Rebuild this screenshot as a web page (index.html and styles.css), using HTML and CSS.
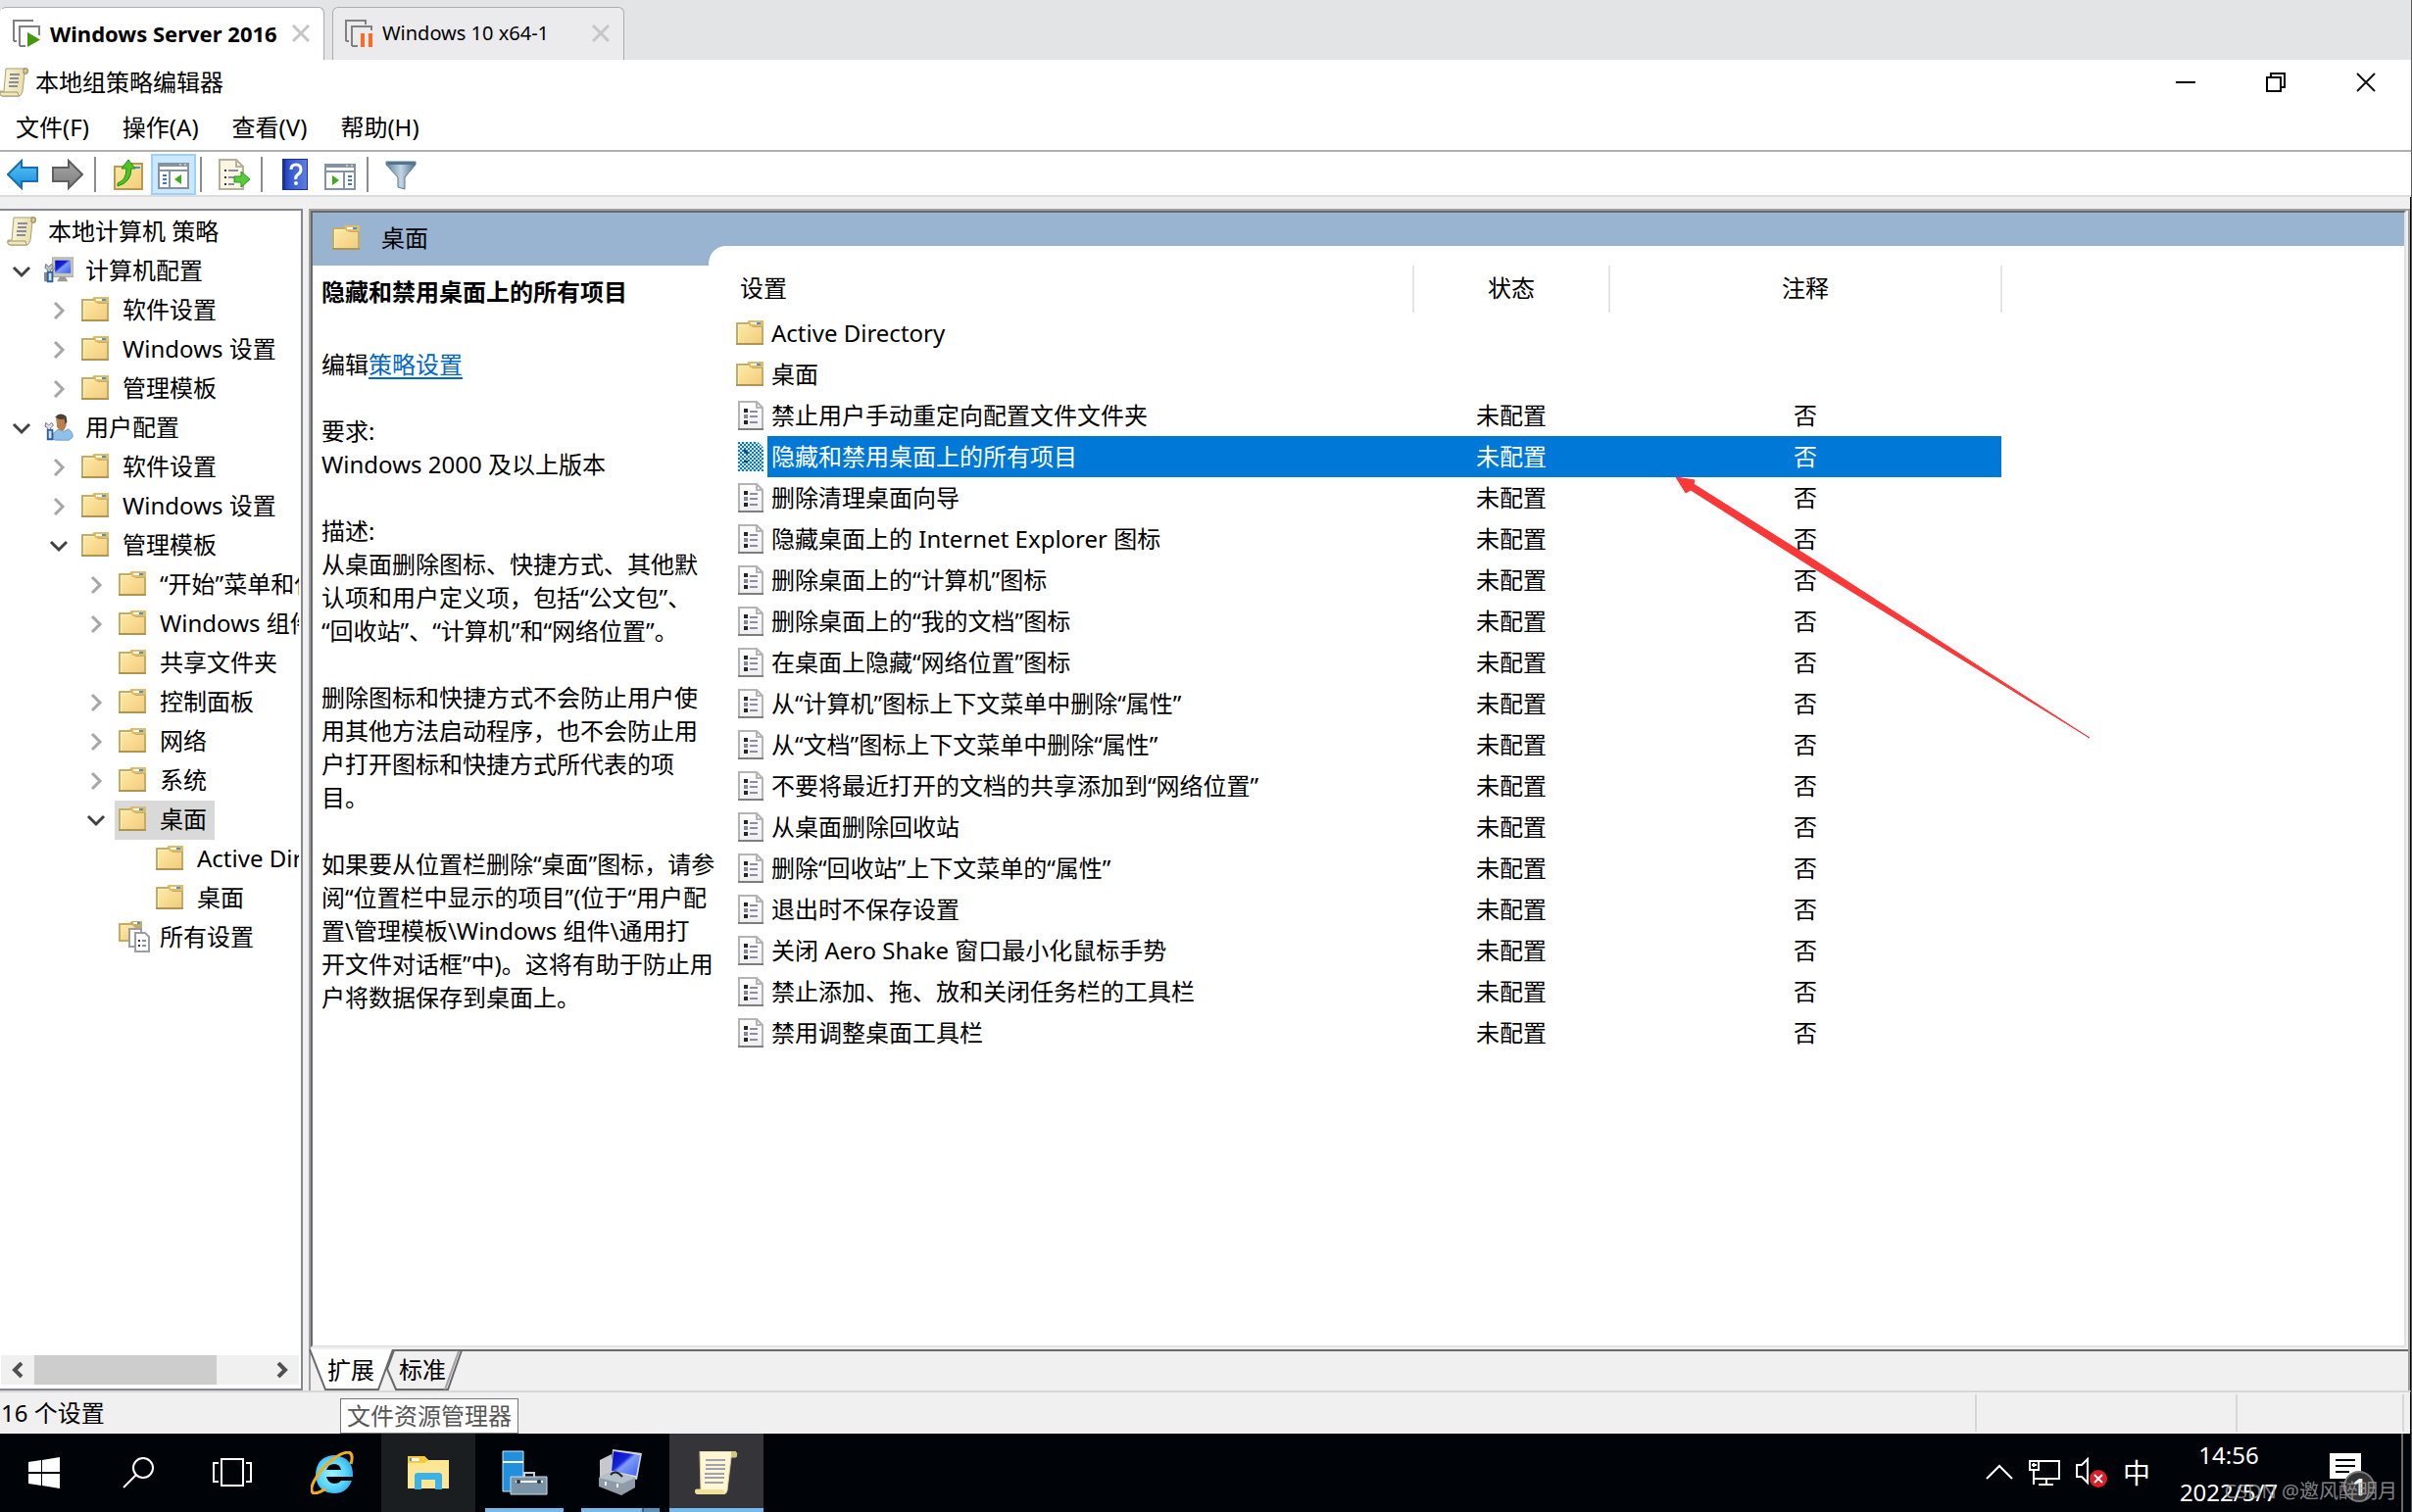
FILE: index.html
```html
<!DOCTYPE html>
<html lang="zh-CN">
<head>
<meta charset="utf-8">
<title>本地组策略编辑器</title>
<link rel="stylesheet" href="styles.css">
</head>
<body>
<svg class="defs" aria-hidden="true">
  <defs>
    <linearGradient id="gFolder" x1="0" y1="0" x2="1" y2="1"><stop offset="0" stop-color="#ffeaa6"/><stop offset="1" stop-color="#f1cd7c"/></linearGradient>
    <linearGradient id="gPaper" x1="0" y1="0" x2="1" y2="0"><stop offset="0" stop-color="#fbf7dc"/><stop offset="1" stop-color="#e6dba2"/></linearGradient>
    <linearGradient id="gScreen" x1="0" y1="0" x2="1" y2="1"><stop offset="0" stop-color="#0208b8"/><stop offset=".4" stop-color="#1626dc"/><stop offset=".5" stop-color="#7f9cf6"/><stop offset="1" stop-color="#3a5cf0"/></linearGradient>
    <linearGradient id="gBlue" x1="0" y1="0" x2="0" y2="1"><stop offset="0" stop-color="#5cc4f7"/><stop offset="1" stop-color="#1490e0"/></linearGradient>
    <linearGradient id="gGray" x1="0" y1="0" x2="0" y2="1"><stop offset="0" stop-color="#a8a8a8"/><stop offset="1" stop-color="#7c7c7c"/></linearGradient>
    <linearGradient id="gHelp" x1="0" y1="0" x2="1" y2="0"><stop offset="0" stop-color="#2440b8"/><stop offset=".2" stop-color="#3557cf"/><stop offset="1" stop-color="#5a7ee0"/></linearGradient>
    <linearGradient id="gFunnel" x1="0" y1="0" x2="1" y2="0"><stop offset="0" stop-color="#5f7f99"/><stop offset=".5" stop-color="#c3d6e4"/><stop offset="1" stop-color="#4d6f8b"/></linearGradient>
    <radialGradient id="gIe" cx=".45" cy=".5" r=".6"><stop offset="0" stop-color="#9df4ff"/><stop offset=".6" stop-color="#5ad6fb"/><stop offset="1" stop-color="#2aa4ea"/></radialGradient>
    <linearGradient id="gDoc" x1="0" y1="0" x2="0" y2="1"><stop offset="0" stop-color="#ffffff"/><stop offset="1" stop-color="#eeeeee"/></linearGradient>
    <pattern id="pDither" width="4" height="4" patternUnits="userSpaceOnUse"><path d="M0 0h2v2H0zM2 2h2v2H2z" fill="#0078d7"/></pattern>
  </defs>
  <symbol id="folder" viewBox="0 0 28 28">
    <path d="M0 3h11l3-2h14v25H0z" fill="#c8ab62"/>
    <path d="M2 5h12l3 3h9v16H2z" fill="url(#gFolder)"/>
    <path d="M2 5h11v1H3v18H2z" fill="#fff4c8"/>
    <path d="M12 1h16v6H14z" fill="#e2bb62"/><path d="M15 3h9v2h-9z" fill="#fff"/><path d="M21 3h4v2h-4z" fill="#3c96e0"/>
    <path d="M0 24h28v2H0z" fill="#b09453"/>
  </symbol>
  <symbol id="doc" viewBox="0 0 26 30">
    <path d="M1 1h18l6 6v22H1z" fill="url(#gDoc)" stroke="#b4b4b4" stroke-width="2"/>
    <path d="M19 1v6h6" fill="none" stroke="#b4b4b4" stroke-width="2"/>
    <path d="M0 28h26v2H0z" fill="#7e7e7e"/>
    <path d="M6 8h4v4H6zM6 20h4v4H6z" fill="#24242c"/><path d="M6 14h4v4H6z" fill="#85859c"/>
    <path d="M12 10h8v2h-8zM12 15h8v2h-8zM12 21h8v2h-8z" fill="#8c8ca8"/>
  </symbol>
  <symbol id="docsel" viewBox="0 0 26 30">
    <path d="M0 0h20l6 6v24H0z" fill="#dfeaf5"/><path d="M0 0h20l6 6v24H0z" fill="url(#pDither)"/>
    <path d="M6 8l4 4M6 20h4" stroke="#123c78" stroke-width="2"/>
  </symbol>
  <symbol id="scroll" viewBox="0 0 30 30">
    <path d="M7 1h21q2 1 1 5h-3l-2 18q-1 5-4 5H3q-3-1-2-5h4z" fill="url(#gPaper)" stroke="#aaa07a" stroke-width="1"/>
    <path d="M25 1h4q1 3-1 5h-3z" fill="#d9cd8f" stroke="#8d8460" stroke-width="1"/>
    <path d="M1 25h18q0 3 2 4H3q-3-1-2-4z" fill="#f1e9b7" stroke="#9c9370" stroke-width="1"/>
    <path d="M11 7h10M11 11h9M10 15h10M10 19h9" stroke="#8b8ba0" stroke-width="2"/>
  </symbol>
  <symbol id="pcconf" viewBox="0 0 32 30">
    <path d="M9 1h23v21H9z" fill="#c6c6ba" stroke="#a4a49c"/><path d="M12 4h17v14H12z" fill="url(#gScreen)"/>
    <path d="M17 22h6l3 5H14z" fill="#9a9a92"/>
    <path d="M2 8l3 3 3-3 2 3-3 4v2H4v-2l-3-3zM12 12l-3 4" fill="#b8c4bc" stroke="#667"/><path d="M0 17h4v10H0z" fill="#8b8b86"/><path d="M4 17h5v10H4z" fill="#cfe2f6" stroke="#2c5ea0" stroke-width="2"/>
  </symbol>
  <symbol id="userconf" viewBox="0 0 32 30">
    <path d="M9 28q0-9 8-11l4 3 5-3q6 3 5 9l-4 3H13z" fill="#8fc0ea" stroke="#6a9ccc"/>
    <path d="M13 5q5-6 11 0v9l-3 5h-3l-4-4z" fill="#b97f4e"/><path d="M12 4q5-6 12-1l1 6-2 3-1-6q-5 1-8-1z" fill="#4a4038"/>
    <path d="M2 10l3 3 3-3 2 3-3 3v2H4v-2l-3-2z" fill="#e0e4e8" stroke="#667"/><path d="M4 18h5v10H4z" fill="#cfe2f6" stroke="#2c5ea0" stroke-width="2"/>
  </symbol>
  <symbol id="allset" viewBox="0 0 32 32">
    <path d="M0 2h11l3-2h10v21H0z" fill="#c8ab62"/><path d="M2 4h12l3 3h5v12H2z" fill="url(#gFolder)"/><path d="M15 1h6v2h-6z" fill="#fff"/><path d="M19 1h3v2h-3z" fill="#3c96e0"/>
    <path d="M11 8h12v18H11z" fill="#fff" stroke="#9c9ca4" stroke-width="2"/><path d="M17 12h10l4 4v15H17z" fill="#fff" stroke="#9c9ca4" stroke-width="2"/>
    <path d="M20 20h2M20 25h2" stroke="#333" stroke-width="2"/><path d="M24 20h4M24 25h4" stroke="#8c8ca8" stroke-width="2"/>
  </symbol>
  <symbol id="open" viewBox="0 0 20 20"><path d="M2 6l8 8 8-8" fill="none" stroke="#404040" stroke-width="3"/></symbol>
  <symbol id="shut" viewBox="0 0 20 20"><path d="M6 2l8 8-8 8" fill="none" stroke="#a6a6a6" stroke-width="3"/></symbol>
  <symbol id="cross" viewBox="0 0 18 18"><path d="M1 1l16 16M17 1L1 17" fill="none" stroke="#c6c6c6" stroke-width="3"/></symbol>
</svg>

<div class="desktop">
<nav class="vmtabs">
  <div class="vmtab vmtab-on">
    <svg class="i28" viewBox="0 0 28 28"><path d="M1 22V1h20M7 27V7h20v9M1 22h3M7 27h6" fill="none" stroke="#808080" stroke-width="2"/><path d="M15 13l13 7.500-13 7.500z" fill="#46990f"/></svg>
    <span class="vmname">Windows Server 2016</span>
    <button class="vmclose" aria-label="关闭"><svg class="i18"><use href="#cross"/></svg></button>
  </div>
  <div class="vmtab">
    <svg class="i28" viewBox="0 0 28 28"><path d="M1 22V1h20v4M7 27V7h20v4M1 22h3M7 27h6" fill="none" stroke="#808080" stroke-width="2"/><path d="M16 14h4v14h-4zM24 14h4v14h-4z" fill="#ff6a22"/></svg>
    <span class="vmname">Windows 10 x64-1</span>
    <button class="vmclose" aria-label="关闭"><svg class="i18"><use href="#cross"/></svg></button>
  </div>
</nav>

<header class="titlebar">
  <svg class="i30"><use href="#scroll"/></svg>
  <h1>本地组策略编辑器</h1>
  <div class="winbtns">
    <button aria-label="最小化"><svg class="i20" viewBox="0 0 20 20"><path d="M0 10h20" stroke="#000" stroke-width="2"/></svg></button>
    <button aria-label="还原"><svg class="i20" viewBox="0 0 20 20"><path d="M1 5h14v14H1zM5 5V1h14v14h-4" fill="none" stroke="#000" stroke-width="2"/></svg></button>
    <button aria-label="关闭窗口"><svg class="i20" viewBox="0 0 20 20"><path d="M1 1l18 18M19 1L1 19" stroke="#111" stroke-width="2"/></svg></button>
  </div>
</header>
<nav class="menubar">
  <button>文件(F)</button><button>操作(A)</button><button>查看(V)</button><button>帮助(H)</button>
</nav>
<div class="toolbar">
  <button class="tool" aria-label="后退"><svg class="i32" viewBox="0 0 32 32"><path d="M1 16L15 2v7h16v14H15v7z" fill="url(#gBlue)" stroke="#1c6cb4" stroke-width="2"/></svg></button>
  <button class="tool" aria-label="前进"><svg class="i32" viewBox="0 0 32 32"><path d="M31 16L17 2v7H1v14h16v7z" fill="url(#gGray)" stroke="#5e5e5e" stroke-width="2"/></svg></button>
  <span class="sep"></span>
  <button class="tool" aria-label="上移"><svg class="i32" viewBox="0 0 32 32"><path d="M2 8h10l3-3h15v26H2z" fill="url(#gFolder)" stroke="#b89a50" stroke-width="2"/><path d="M22 8h6v2h-6z" fill="#3c96e0"/><path d="M5 25q9-3 9-15H9l7-9 7 9h-4q0 14-14 18z" fill="#4cc424" stroke="#2b8a18" stroke-width="1"/></svg></button>
  <button class="tool tool-on" aria-label="显示控制台树"><svg class="i32" viewBox="0 0 32 32"><path d="M1 5h30v25H1z" fill="#fff" stroke="#8492a2" stroke-width="2"/><path d="M1 4h30v4H1zM1 11h30v2H1z" fill="#8492a2"/><path d="M22 6h2M27 6h2" stroke="#fff"/><path d="M12 13v17" stroke="#8492a2" stroke-width="2"/><path d="M5 17h4M5 21h4M5 25h4" stroke="#3d78c0" stroke-width="2"/><path d="M24 16v10l-7-5z" fill="#3cab1e"/></svg></button>
  <span class="sep"></span>
  <button class="tool" aria-label="导出列表"><svg class="i32" viewBox="0 0 32 32"><path d="M1 1h17l7 7v23H1z" fill="#fbf6e2" stroke="#b4b09c" stroke-width="2"/><path d="M18 1v7h7" fill="none" stroke="#b4b09c" stroke-width="2"/><path d="M6 12h2M6 19h2M6 26h2" stroke="#333" stroke-width="2"/><path d="M10 12h10M10 19h6M10 26h6" stroke="#8c8ca8" stroke-width="2"/><path d="M16 18h7v-5l9 8-9 8v-5h-7z" fill="#58cc38" stroke="#2f9420"/></svg></button>
  <span class="sep"></span>
  <button class="tool" aria-label="帮助"><svg class="i32" viewBox="0 0 32 32"><path d="M3 0h26v32H3z" fill="#1d318f"/><path d="M6 1h22v30H6z" fill="url(#gHelp)"/><path d="M12 11q0-5 5-5t5 5q0 3-3 5t-2 5" fill="none" stroke="#fff" stroke-width="3"/><circle cx="17" cy="25" r="2" fill="#fff"/></svg></button>
  <button class="tool" aria-label="显示操作窗格"><svg class="i32" viewBox="0 0 32 32"><path d="M1 6h30v25H1z" fill="#fff" stroke="#8492a2" stroke-width="2"/><path d="M1 5h30v4H1zM1 12h30v2H1z" fill="#8492a2"/><path d="M22 7h2M27 7h2" stroke="#fff"/><path d="M20 14v17" stroke="#8492a2" stroke-width="2"/><path d="M24 18h4M24 22h4M24 26h4" stroke="#3d78c0" stroke-width="2"/><path d="M8 17v10l7-5z" fill="#3cab1e"/></svg></button>
  <span class="sep"></span>
  <button class="tool" aria-label="筛选器"><svg class="i32" viewBox="0 0 32 32"><path d="M1 3h30v3L20 19v12l-7-2V19L1 6z" fill="url(#gFunnel)" stroke="#5b7a93"/><path d="M3 3h26v3H3z" fill="#54748e"/></svg></button>
</div>

<main class="panes">
  <section class="treepane">
    <ul class="tree">
      <li class="l0"><span class="node"><svg class="i30"><use href="#scroll"/></svg>本地计算机 策略</span></li>
      <li class="l1"><button class="tw" aria-label="折叠"><svg class="i20"><use href="#open"/></svg></button><span class="node"><svg class="i30"><use href="#pcconf"/></svg>计算机配置</span></li>
      <li class="l2"><button class="tw" aria-label="展开"><svg class="i20"><use href="#shut"/></svg></button><span class="node"><svg class="i28"><use href="#folder"/></svg>软件设置</span></li>
      <li class="l2"><button class="tw" aria-label="展开"><svg class="i20"><use href="#shut"/></svg></button><span class="node"><svg class="i28"><use href="#folder"/></svg>Windows 设置</span></li>
      <li class="l2"><button class="tw" aria-label="展开"><svg class="i20"><use href="#shut"/></svg></button><span class="node"><svg class="i28"><use href="#folder"/></svg>管理模板</span></li>
      <li class="l1"><button class="tw" aria-label="折叠"><svg class="i20"><use href="#open"/></svg></button><span class="node"><svg class="i30"><use href="#userconf"/></svg>用户配置</span></li>
      <li class="l2"><button class="tw" aria-label="展开"><svg class="i20"><use href="#shut"/></svg></button><span class="node"><svg class="i28"><use href="#folder"/></svg>软件设置</span></li>
      <li class="l2"><button class="tw" aria-label="展开"><svg class="i20"><use href="#shut"/></svg></button><span class="node"><svg class="i28"><use href="#folder"/></svg>Windows 设置</span></li>
      <li class="l2"><button class="tw" aria-label="折叠"><svg class="i20"><use href="#open"/></svg></button><span class="node"><svg class="i28"><use href="#folder"/></svg>管理模板</span></li>
      <li class="l3"><button class="tw" aria-label="展开"><svg class="i20"><use href="#shut"/></svg></button><span class="node"><svg class="i28"><use href="#folder"/></svg>“开始”菜单和任务栏</span></li>
      <li class="l3"><button class="tw" aria-label="展开"><svg class="i20"><use href="#shut"/></svg></button><span class="node"><svg class="i28"><use href="#folder"/></svg>Windows 组件</span></li>
      <li class="l3"><span class="tw"></span><span class="node"><svg class="i28"><use href="#folder"/></svg>共享文件夹</span></li>
      <li class="l3"><button class="tw" aria-label="展开"><svg class="i20"><use href="#shut"/></svg></button><span class="node"><svg class="i28"><use href="#folder"/></svg>控制面板</span></li>
      <li class="l3"><button class="tw" aria-label="展开"><svg class="i20"><use href="#shut"/></svg></button><span class="node"><svg class="i28"><use href="#folder"/></svg>网络</span></li>
      <li class="l3"><button class="tw" aria-label="展开"><svg class="i20"><use href="#shut"/></svg></button><span class="node"><svg class="i28"><use href="#folder"/></svg>系统</span></li>
      <li class="l3"><button class="tw" aria-label="折叠"><svg class="i20"><use href="#open"/></svg></button><span class="node node-on"><svg class="i28"><use href="#folder"/></svg>桌面</span></li>
      <li class="l4"><span class="tw"></span><span class="node"><svg class="i28"><use href="#folder"/></svg>Active Directory</span></li>
      <li class="l4"><span class="tw"></span><span class="node"><svg class="i28"><use href="#folder"/></svg>桌面</span></li>
      <li class="l3"><span class="tw"></span><span class="node"><svg class="i32"><use href="#allset"/></svg>所有设置</span></li>
    </ul>
    <div class="hscroll">
      <button aria-label="向左滚动"><svg class="i16" viewBox="0 0 16 16"><path d="M12 1L5 8l7 7" fill="none" stroke="#505050" stroke-width="4"/></svg></button>
      <div class="track"><div class="thumb"></div></div>
      <button aria-label="向右滚动"><svg class="i16" viewBox="0 0 16 16"><path d="M4 1l7 7-7 7" fill="none" stroke="#505050" stroke-width="4"/></svg></button>
    </div>
  </section>

  <section class="detail">
    <div class="view">
      <div class="info">
        <div class="band"><svg class="i28"><use href="#folder"/></svg>桌面</div>
        <div class="infotext">
          <h2>隐藏和禁用桌面上的所有项目</h2>
          <p class="edit">编辑<a href="#policy">策略设置</a></p>
          <p>要求:<br>Windows 2000 及以上版本</p>
          <p>描述:<br>从桌面删除图标、快捷方式、其他默<br>认项和用户定义项，包括“公文包”、<br>“回收站”、“计算机”和“网络位置”。</p>
          <p>删除图标和快捷方式不会防止用户使<br>用其他方法启动程序，也不会防止用<br>户打开图标和快捷方式所代表的项<br>目。</p>
          <p>如果要从位置栏删除“桌面”图标，请参<br>阅“位置栏中显示的项目”(位于“用户配<br>置\管理模板\Windows 组件\通用打<br>开文件对话框”中)。这将有助于防止用<br>户将数据保存到桌面上。</p>
        </div>
      </div>
      <div class="sheetwrap">
        <div class="sheet">
          <table id="policy">
            <thead><tr><th class="name">设置</th><th class="state">状态</th><th class="note">注释</th></tr></thead>
            <tbody>
              <tr><td><span class="item"><svg class="i28"><use href="#folder"/></svg><span>Active Directory</span></span></td><td></td><td></td></tr>
              <tr><td><span class="item"><svg class="i28"><use href="#folder"/></svg><span>桌面</span></span></td><td></td><td></td></tr>
              <tr><td><span class="item"><svg class="idoc"><use href="#doc"/></svg><span>禁止用户手动重定向配置文件文件夹</span></span></td><td>未配置</td><td>否</td></tr>
              <tr class="on"><td><span class="item"><svg class="idoc"><use href="#docsel"/></svg><span>隐藏和禁用桌面上的所有项目</span></span></td><td>未配置</td><td>否</td></tr>
              <tr><td><span class="item"><svg class="idoc"><use href="#doc"/></svg><span>删除清理桌面向导</span></span></td><td>未配置</td><td>否</td></tr>
              <tr><td><span class="item"><svg class="idoc"><use href="#doc"/></svg><span>隐藏桌面上的 Internet Explorer 图标</span></span></td><td>未配置</td><td>否</td></tr>
              <tr><td><span class="item"><svg class="idoc"><use href="#doc"/></svg><span>删除桌面上的“计算机”图标</span></span></td><td>未配置</td><td>否</td></tr>
              <tr><td><span class="item"><svg class="idoc"><use href="#doc"/></svg><span>删除桌面上的“我的文档”图标</span></span></td><td>未配置</td><td>否</td></tr>
              <tr><td><span class="item"><svg class="idoc"><use href="#doc"/></svg><span>在桌面上隐藏“网络位置”图标</span></span></td><td>未配置</td><td>否</td></tr>
              <tr><td><span class="item"><svg class="idoc"><use href="#doc"/></svg><span>从“计算机”图标上下文菜单中删除“属性”</span></span></td><td>未配置</td><td>否</td></tr>
              <tr><td><span class="item"><svg class="idoc"><use href="#doc"/></svg><span>从“文档”图标上下文菜单中删除“属性”</span></span></td><td>未配置</td><td>否</td></tr>
              <tr><td><span class="item"><svg class="idoc"><use href="#doc"/></svg><span>不要将最近打开的文档的共享添加到“网络位置”</span></span></td><td>未配置</td><td>否</td></tr>
              <tr><td><span class="item"><svg class="idoc"><use href="#doc"/></svg><span>从桌面删除回收站</span></span></td><td>未配置</td><td>否</td></tr>
              <tr><td><span class="item"><svg class="idoc"><use href="#doc"/></svg><span>删除“回收站”上下文菜单的“属性”</span></span></td><td>未配置</td><td>否</td></tr>
              <tr><td><span class="item"><svg class="idoc"><use href="#doc"/></svg><span>退出时不保存设置</span></span></td><td>未配置</td><td>否</td></tr>
              <tr><td><span class="item"><svg class="idoc"><use href="#doc"/></svg><span>关闭 Aero Shake 窗口最小化鼠标手势</span></span></td><td>未配置</td><td>否</td></tr>
              <tr><td><span class="item"><svg class="idoc"><use href="#doc"/></svg><span>禁止添加、拖、放和关闭任务栏的工具栏</span></span></td><td>未配置</td><td>否</td></tr>
              <tr><td><span class="item"><svg class="idoc"><use href="#doc"/></svg><span>禁用调整桌面工具栏</span></span></td><td>未配置</td><td>否</td></tr>
            </tbody>
          </table>
          <svg class="pointer" viewBox="0 0 424 268" aria-hidden="true"><path d="M0 0L19 3l-1 4 127 80 277 179L141 93 15 13l-5 3z" fill="#fb3838" stroke="#fb3838" stroke-width="1"/></svg>
        </div>
      </div>
    </div>
    <div class="pagetabs">
      <button class="ptab ptab-on"><svg viewBox="0 0 86 42" aria-hidden="true"><path d="M1 0l16 41h54L86 0z" fill="#fff"/><path d="M1 0l16 41h54L86 0" fill="none" stroke="#696969" stroke-width="2"/></svg><span>扩展</span></button>
      <button class="ptab"><svg viewBox="0 0 80 42" aria-hidden="true"><path d="M80 1H9L2 20l9 21h53L78 1" fill="#f0f0f0" stroke="#696969" stroke-width="2"/><path d="M75 2L61 41" stroke="#a0a0a0" stroke-width="2"/></svg><span>标准</span></button>
    </div>
  </section>
</main>

<footer class="status"><span class="count">16 个设置</span><span class="cell c1"></span><span class="cell c2"></span><span class="cell c3"></span>
  <div class="tip" role="tooltip">文件资源管理器</div>
</footer>

<div class="taskbar">
  <button class="start" aria-label="开始"><svg class="i32" viewBox="0 0 32 32"><path d="M0 5l13-2v12H0zM14 3l18-3v15H14zM0 17h13v12L0 27zM14 17h18v15l-18-3z" fill="#fff"/></svg></button>
  <button class="tb" aria-label="搜索"><svg class="i32" viewBox="0 0 32 32"><circle cx="21" cy="11" r="10" fill="none" stroke="#fff" stroke-width="2"/><path d="M14 18L1 31" stroke="#fff" stroke-width="2"/></svg></button>
  <button class="tb" aria-label="任务视图"><svg class="i40" viewBox="0 0 40 40"><path d="M9 6h22v27H9zM6 10H1v19h5M34 10h5v19h-5" fill="none" stroke="#fff" stroke-width="2"/></svg></button>
  <div class="apps">
    <button class="tb" aria-label="Internet Explorer"><svg class="i44" viewBox="0 0 44 44"><path d="M43 26H16q2 7 8 7 5 0 7-3h11q-5 13-18 13Q6 42 5 24 6 5 24 4q20 2 19 22zM16 19h15q-1-6-7-6t-8 6z" fill="url(#gIe)" fill-rule="evenodd"/><path d="M41 13q3-10-2-12Q28 1 12 18-4 38 3 43q6 0 12-5" fill="none" stroke="#f4ab1c" stroke-width="3"/></svg></button>
    <button class="tb tb-hover" aria-label="文件资源管理器"><svg class="i44" viewBox="0 0 44 44"><path d="M1 5h17l4 4h21v29H1z" fill="#ffe694"/><path d="M1 5h17l4 4-4 3H1z" fill="#fdc834"/><path d="M5 7h8v3H5z" fill="#fff"/><path d="M3 7h2v3H3z" fill="#2aa0e0"/><path d="M8 39V25q0-3 3-3h22q3 0 3 3v14h-7V29H15v10z" fill="#3cb3e8"/></svg></button>
    <button class="tb tb-run" aria-label="服务器管理器"><svg class="i48" viewBox="0 0 48 48"><path d="M2 2h21v41H2z" fill="#2090de" stroke="#cfe6f8" stroke-width="1"/><path d="M2 13h21" stroke="#fff" stroke-width="2"/><path d="M24 28v-4h10v4" fill="none" stroke="#c4d0d8" stroke-width="2"/><path d="M10 28h37v18H10z" fill="#7893a6" stroke="#cfdae2" stroke-width="1"/><path d="M15 33h28" stroke="#fff" stroke-width="2"/><circle cx="18" cy="33" r="2" fill="#234"/><circle cx="39" cy="33" r="2" fill="#234"/></svg></button>
    <button class="tb tb-run tb-multi" aria-label="管理控制台"><svg class="i48" viewBox="0 0 48 48"><path d="M3 11l12-6v22L3 30z" fill="#c8c8cc"/><path d="M16 0l30 4-5 27-27-6z" fill="#d4d4d8"/><path d="M17 2l27 4-4 21-25-5z" fill="url(#gScreen)"/><path d="M2 29l13-6 24 6v10l-14 8L2 38z" fill="#8f9ca8"/><path d="M2 29l13-6 24 6-13 6z" fill="#b4c0ca"/><path d="M14 26q5-6 12 2" fill="none" stroke="#222" stroke-width="2"/><path d="M9 33v4M21 35v4" stroke="#eee" stroke-width="2"/></svg></button>
    <button class="tb tb-active" aria-label="本地组策略编辑器"><svg class="i44" viewBox="0 0 44 44"><path d="M5 0h36q3 2 1 6h-5l-4 34q-1 4-4 4H3q-4-1-2-5h5z" fill="#fff6d4" stroke="#d8cc98"/><path d="M37 0h4q3 2 1 6h-5z" fill="#d4c47c"/><path d="M1 39h28q3 3 0 5H3q-4-1-2-5z" fill="#f0e098"/><path d="M11 9h20M11 14h20M11 18h20M10 23h20M10 27h20M10 32h19" stroke="#a0a0b0" stroke-width="2"/></svg></button>
  </div>
  <div class="tray">
    <button class="chev" aria-label="显示隐藏的图标"><svg class="i28" viewBox="0 0 28 28"><path d="M1 20L14 7l13 13" fill="none" stroke="#fff" stroke-width="2"/></svg></button>
    <svg class="i32" viewBox="0 0 32 32"><path d="M10 4h21v18H5V13M1 4h9v9H1zM5 22v6M18 22v5M10 28h15M3 8h5M5 6v4" fill="none" stroke="#fff" stroke-width="2"/></svg>
    <svg class="i32" viewBox="0 0 32 32"><path d="M1 8h5l6-6v24l-6-6H1z" fill="none" stroke="#fff" stroke-width="2"/><circle cx="23" cy="22" r="9" fill="#dc1e28"/><path d="M19 18l8 8M27 18l-8 8" stroke="#fff" stroke-width="2"/></svg>
    <span class="ime">中</span>
    <time class="clock"><span>14:56</span><span>2022/5/7</span></time>
    <button class="notice" aria-label="通知"><svg class="i48" viewBox="0 0 48 48"><path d="M8 4h32v26h-8l-7 7v-7H8z" fill="#fff"/><path d="M14 11h20M14 17h20M14 23h14" stroke="#000308" stroke-width="2"/></svg><span class="badge">1</span></button>
    <span class="mark">CSDN @邀风醉明月</span>
  </div>
</div>
</div>
</body>
</html>
```
FILE: styles.css
```css
* { box-sizing: border-box; }
body {
  margin: 0;
  background: #f0f0f0;
  color: #000;
  font: 24px/34px "Noto Sans", "Noto Sans CJK SC", sans-serif;
}
h1, h2, p, ul { margin: 0; padding: 0; font-size: inherit; font-weight: normal; }
button { margin: 0; padding: 0; border: 0; background: none; color: inherit; font: inherit; display: flex; align-items: center; justify-content: center; }
svg { flex: none; display: block; }
.defs { position: absolute; width: 0; height: 0; }
.i16 { width: 16px; height: 16px; }
.i18 { width: 18px; height: 18px; }
.i20 { width: 20px; height: 20px; }
.i28 { width: 28px; height: 28px; }
.i30 { width: 30px; height: 30px; }
.i32 { width: 32px; height: 32px; }
.i40 { width: 40px; height: 40px; }
.i44 { width: 44px; height: 44px; }
.i48 { width: 48px; height: 48px; }
.idoc { width: 26px; height: 30px; }

.desktop { min-height: 100vh; display: flex; flex-direction: column; border-right: 1px solid #5a5a5a; }

/* virtual machine tabs */
.vmtabs { display: flex; align-items: flex-end; gap: 8px; height: 61px; background: #e3e4e6; }
.vmtab {
  display: flex; align-items: center; height: 54px; width: 298px; padding: 0 14px 2px 12px;
  background: #ebebed; border: 1px solid #adadb0; border-bottom: 0; border-radius: 6px 6px 0 0;
  font-size: 20px;
}
.vmtab-on { width: 331px; background: #fff; border-left-color: #fff; font-size: 22px; font-weight: bold; }
.vmname { margin-left: 10px; flex: 1; white-space: nowrap; }

/* window chrome */
.titlebar { display: flex; align-items: center; height: 46px; background: #fff; }
.titlebar h1 { margin-left: 7px; flex: 1; }
.titlebar > svg { margin-left: -1px; }
.winbtns { display: flex; align-self: stretch; }
.winbtns button { width: 92px; }
.menubar { display: flex; gap: 34px; height: 48px; padding-left: 16px; background: #fff; border-bottom: 2px solid #b0b0b0; }
.toolbar { display: flex; align-items: center; height: 46px; padding: 2px 0 0 0; background: #fff; border-bottom: 2px solid #dcdcdc; }
.tool { width: 46px; height: 42px; border: 2px solid transparent; }
.tool-on { background: #cce8ff; border-color: #99d1ff; }
.sep { width: 2px; height: 36px; margin: 0 10px 0 4px; background: #8c8c8c; }

/* panes */
.panes { flex: 1; display: flex; gap: 6px; padding-top: 12px; border-right: 1px solid #000; }
.treepane {
  width: 309px; flex: none; display: flex; flex-direction: column; padding: 2px 2px 4px 1px;
  background: #fff; border: solid #828790; border-width: 2px 2px 2px 0; overflow: hidden;
}
.tree { flex: 1; list-style: none; overflow: hidden; }
.tree li { display: flex; height: 40px; white-space: nowrap; }
.l0, .l1 { padding-left: 2px; }
.l2 { padding-left: 40px; }
.l3 { padding-left: 78px; }
.l4 { padding-left: 116px; }
.tree .tw { width: 38px; flex: none; }
.node { display: flex; align-items: center; padding: 0 8px 2px 4px; }
.node svg { margin-right: 14px; }
.node .i30 { margin-right: 12px; }
.node .i32 { margin-right: 10px; }
.node-on { background: #d9d9d9; }
.hscroll { display: flex; height: 30px; background: #f0f0f0; }
.hscroll button { width: 34px; }
.track { flex: 1; }
.thumb { width: 79%; height: 100%; background: #cdcdcd; }

.detail {
  flex: 1; min-width: 0; display: flex; flex-direction: column;
  border: solid #a0a0a0; border-width: 2px 2px 0 2px;
}
.view {
  flex: 1; display: flex; margin: 0 2px 2px 0; background: #fff;
  border: 2px solid #696969; border-right-color: #e3e3e3; border-bottom-color: #e3e3e3;
}
.info { width: 404px; flex: none; position: relative; z-index: 1; }
.band { display: flex; align-items: center; height: 54px; padding: 0 0 2px 20px; gap: 22px; background: #99b4d1; }
.infotext { padding: 10px 0 0 9px; white-space: nowrap; }
.infotext h2 { font-weight: bold; }
.infotext p + p { margin-top: 34px; }
.infotext .edit { margin-top: 40px; }
a { color: #0066cc; text-underline-offset: 4px; }
.sheetwrap { flex: 1; padding-top: 34px; background: linear-gradient(#99b4d1 54px, #fff 54px); }
.sheet { position: relative; height: 100%; padding: 20px 0 0 28px; background: #fff; border-top-left-radius: 18px; }
table { border-collapse: collapse; table-layout: fixed; width: 1291px; }
th { height: 48px; padding: 0 0 2px; font-weight: normal; border-right: 2px solid #e5e5e5; }
.name { width: 691px; text-align: left; padding-left: 4px; }
.state { width: 200px; }
.note { width: 400px; }
td { height: 42px; padding: 0; text-align: center; white-space: nowrap; }
.item { display: flex; align-items: center; height: 42px; }
.item .idoc { margin-left: 2px; }
.item > span { flex: 1; margin-left: 4px; padding: 4px; text-align: left; }
.on td { color: #fff; background: #0078d7; }
.on td:first-child { background: linear-gradient(90deg, #fff 32px, #0078d7 32px); }
.pointer { position: absolute; left: 987px; top: 236px; width: 424px; height: 268px; }

.pagetabs { display: flex; height: 42px; }
.pagetabs::after { content: ""; flex: 1; border-top: 2px solid #696969; }
.ptab { position: relative; width: 86px; margin-left: -2px; }
.ptab svg { position: absolute; left: 0; top: 0; width: 100%; height: 42px; }
.ptab span { position: relative; }
.ptab + .ptab { width: 80px; margin-left: -8px; padding-right: 4px; }
.ptab-on { z-index: 1; }

/* status bar */
.status { position: relative; display: flex; height: 44px; padding: 2px 6px 2px 1px; border-top: 2px solid #d7d7d7; border-right: 1px solid #000; }
.count { flex: 1; line-height: 38px; }
.cell { border-left: 2px solid #d7d7d7; }
.c1 { width: 266px; }
.c2 { width: 170px; }
.c3 { width: 2px; }
.tip { position: absolute; left: 347px; bottom: 0; padding: 0 6px; border: 1px solid #767676; background: #fff; color: #575757; }

/* task bar */
.taskbar { display: flex; height: 80px; background: #000308; color: #fff; }
.start { width: 93px; padding-right: 4px; }
.tb { position: relative; width: 96px; }
.apps { display: flex; gap: 2px; margin-left: 6px; }
.tb-hover { background: #1a1e20; }
.tb-active { background: #353539; }
.tb-run::after, .tb-active::after { content: ""; position: absolute; left: 8px; right: 8px; bottom: 0; height: 4px; background: #76b9ed; }
.tb-active::after { left: 0; right: 0; }
.tb-multi::after { background: linear-gradient(90deg, #76b9ed 62px, #3c6080 62px, #3c6080 64px, #5c90bc 64px); }
.tray { position: relative; flex: 1; display: flex; align-items: center; justify-content: flex-end; gap: 16px; margin-right: 8px; border-right: 2px solid #6a6a6a; }
.ime { width: 28px; font-size: 28px; text-align: center; }
.clock { display: flex; flex-direction: column; gap: 4px; width: 128px; padding-top: 2px; text-align: center; }
.notice { position: relative; width: 78px; height: 80px; margin-right: 18px; }
.badge { position: absolute; left: 37px; top: 38px; width: 32px; height: 32px; border: 2px solid #777; border-radius: 16px; background: #333; font-weight: bold; line-height: 28px; text-align: center; }
.mark { position: absolute; right: 4px; bottom: 4px; color: #a0a0a0; font-size: 20px; opacity: .8; }
```
